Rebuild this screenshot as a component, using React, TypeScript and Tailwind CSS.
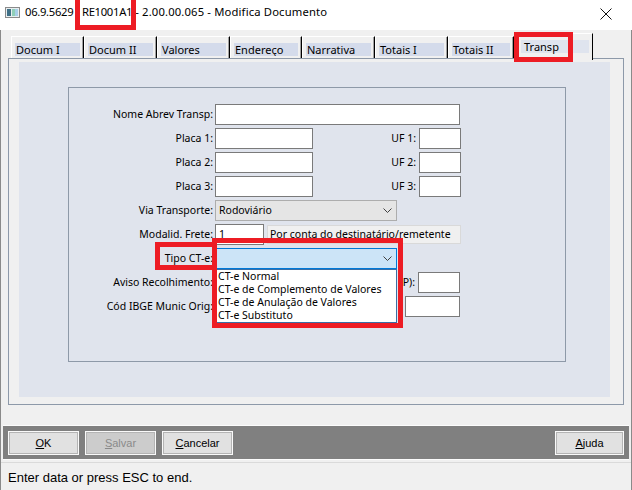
import React from 'react';

const tabs = [
  { label: 'Docum I', w: 'w-[73px]' },
  { label: 'Docum II', w: 'w-[73px]' },
  { label: 'Valores', w: 'w-[73px]' },
  { label: 'Endereço', w: 'w-[72px]' },
  { label: 'Narrativa', w: 'w-[73px]' },
  { label: 'Totais I', w: 'w-[73px]' },
  { label: 'Totais II', w: 'w-[66px]' },
];

const ctOptions = [
  'CT-e Normal',
  'CT-e de Complemento de Valores',
  'CT-e de Anulação de Valores',
  'CT-e Substituto',
];

function Chevron() {
  return (
    <svg width="9" height="5" viewBox="0 0 9 5" className="ml-auto mr-[4px]">
      <path d="M0.5 0.5 L4.5 4.5 L8.5 0.5" stroke="#404040" strokeWidth="1" fill="none" />
    </svg>
  );
}

function Label({ children }: { children: React.ReactNode }) {
  return <div className="w-[144px] shrink-0 text-right whitespace-nowrap">{children}</div>;
}

function Input({ w, value }: { w: string; value?: string }) {
  return (
    <div className={`${w} h-[21px] shrink-0 border border-[#7a7a7a] bg-white pl-[3px] leading-[19px]`}>
      {value}
    </div>
  );
}

function Btn({ first, rest, disabled }: { first: string; rest: string; disabled?: boolean }) {
  return (
    <div
      className={`w-[71px] h-[24px] flex items-center justify-center border border-[#fafafa] shadow-[inset_0_0_0_1px_#b4b4b4] text-[11px] ${
        disabled ? 'bg-[#cccccc] text-[#8a8a8a]' : 'bg-[#e1e1e1] text-black'
      }`}
    >
      <span className="underline">{first}</span>
      {rest}
    </div>
  );
}

export default function App() {
  return (
    <div className="relative w-[632px] h-[490px] overflow-hidden bg-white font-['Noto_Sans',sans-serif] text-black">
      {/* title bar */}
      <div className="h-[30px] flex items-start">
        <svg width="15" height="11" viewBox="0 0 15 11" className="ml-[5px] mt-[7px]">
          <rect x="0.5" y="0.5" width="14" height="10" fill="#e8eef0" stroke="#8a8a8a" />
          <rect x="2" y="2" width="4" height="7" fill="#3f6f86" />
          <rect x="7" y="2" width="6" height="7" fill="#8fcfb8" />
          <rect x="10" y="2" width="3" height="7" fill="#a8cfe8" />
        </svg>
        <span className="ml-[5px] mt-[4px] text-[11.25px] leading-[16px] whitespace-nowrap">
          <span className="tracking-[-0.3px]">06.9.5629 - RE1001A1</span>
          <span className="tracking-[0.15px]"> - 2.00.00.065 - Modifica Documento</span>
        </span>
        <svg width="12" height="12" viewBox="0 0 12 12" className="ml-auto mr-[20px] mt-[8px]">
          <path d="M0.5 0.5 L11.5 11.5 M11.5 0.5 L0.5 11.5" stroke="#111" strokeWidth="1" />
        </svg>
      </div>

      {/* window body */}
      <div className="h-[460px] bg-[#f0f0f0] border-x border-[#8a8a8a] flex flex-col">
        {/* tab strip */}
        <div className="h-[28px] flex items-end pl-[10px] text-[11px]">
          {tabs.map((t) => (
            <div
              key={t.label}
              className={`${t.w} h-[22px] shrink-0 border-l border-t border-white border-r border-r-black shadow-[inset_-1px_0_0_#a0a0a0] pt-[6px] pl-[3px] pr-[3px]`}
            >
              <div className="h-[13px] bg-[#d4dbeb] leading-[13px] pl-[1px] whitespace-nowrap overflow-hidden">{t.label}</div>
            </div>
          ))}
          <div className="relative z-10 w-[79px] h-[27px] -mb-[2px] shrink-0 bg-[#f0f0f0] border-l border-t border-white border-r border-r-black pt-[6px] pl-[6px] pr-[3px]">
            <div className="h-[13px] bg-[#dfe4ee] leading-[13px] pl-[3px]">Transp</div>
          </div>
        </div>

        {/* tab page */}
        <div className="ml-[7px] w-[616px] h-[347px] border border-[#8d99a9] pt-[3px] pl-[10px]">
          <div className="w-[591px] h-[335px] bg-[#e0e4ed] pt-[25px] pl-[49px]">
            <div className="w-[498px] h-[275px] border border-[#8e99a8] pt-[16px] text-[10.5px]">
              <div className="flex flex-col gap-[3px]">
                <div className="flex items-center h-[21px] gap-[2px]">
                  <Label>Nome Abrev Transp:</Label>
                  <Input w="w-[245px]" />
                </div>
                {[1, 2, 3].map((n) => (
                  <div key={n} className="flex items-center h-[21px]">
                    <Label>Placa {n}:</Label>
                    <div className="ml-[2px]">
                      <Input w="w-[98px]" />
                    </div>
                    <div className="w-[103px] text-right">UF {n}:</div>
                    <div className="ml-[3px]">
                      <Input w="w-[42px]" />
                    </div>
                  </div>
                ))}
                <div className="flex items-center h-[21px] gap-[2px]">
                  <Label>Via Transporte:</Label>
                  <div className="w-[182px] h-[21px] flex items-center border border-[#adadad] bg-[#e5e5e5] pl-[3px]">
                    <span>Rodoviário</span>
                    <Chevron />
                  </div>
                </div>
                <div className="flex items-center h-[21px]">
                  <Label>Modalid. Frete:</Label>
                  <div className="ml-[2px]">
                    <Input w="w-[49px]" value="1" />
                  </div>
                  <div className="ml-[3px] w-[194px] h-[19px] border border-[#d9d9d9] bg-[#f0f0f0] pl-[2px] leading-[17px] whitespace-nowrap">
                    Por conta do destinatário/remetente
                  </div>
                </div>
                <div className="flex items-center h-[21px] gap-[2px]">
                  <Label>Tipo CT-e:</Label>
                  <div className="relative w-[182px] h-[21px] flex items-center border border-[#0078d7] bg-[#cce4f7]">
                    <Chevron />
                    <div className="absolute left-[-1px] top-[20px] z-20 w-[182px] border border-[#3a6ea5] bg-white">
                      {ctOptions.map((o) => (
                        <div key={o} className="h-[13px] leading-[13px] pl-[2px] whitespace-nowrap">
                          {o}
                        </div>
                      ))}
                    </div>
                  </div>
                </div>
                {/* rows partly hidden under the open list */}
                <div className="flex items-center h-[21px]">
                  <Label>Aviso Recolhimento:</Label>
                  <div className="ml-[2px]">
                    <Input w="w-[90px]" />
                  </div>
                  <div className="flex-1 text-right whitespace-nowrap">P):</div>
                  <div className="ml-[3px] mr-[105px]">
                    <Input w="w-[42px]" />
                  </div>
                </div>
                <div className="flex items-center h-[21px]">
                  <Label>Cód IBGE Munic Orig:</Label>
                  <div className="ml-[2px]">
                    <Input w="w-[70px]" />
                  </div>
                  <div className="flex-1 text-right whitespace-nowrap">:</div>
                  <div className="ml-[2px] mr-[105px]">
                    <Input w="w-[55px]" />
                  </div>
                </div>
              </div>
            </div>
          </div>
        </div>

        {/* button bar */}
        <div className="mt-[20px] mx-[2px] h-[35px] border-y border-[#fcfcfc] bg-[#808080] flex items-start pt-[5px] pl-[5px] pr-[5px] font-['Liberation_Sans',sans-serif]">
          <Btn first="O" rest="K" />
          <div className="ml-[6px]">
            <Btn first="S" rest="alvar" disabled />
          </div>
          <div className="ml-[6px]">
            <Btn first="C" rest="ancelar" />
          </div>
          <div className="ml-auto">
            <div className="w-[69px] h-[24px] flex items-center justify-center border border-[#fafafa] shadow-[inset_0_0_0_1px_#b4b4b4] bg-[#e1e1e1] text-[11px]">
              <span className="underline">A</span>juda
            </div>
          </div>
        </div>

        {/* status bar */}
        <div className="mt-[2px] flex-1 border-t border-[#dadada] pl-[7px] pt-[7px] text-[13px] leading-[15px] font-['Liberation_Sans',sans-serif]">
          Enter data or press ESC to end.
        </div>
      </div>

      {/* red annotation boxes */}
      <div className="absolute left-[75px] top-[-10px] w-[61px] h-[40px] border-[5px] border-[#ed1c24]" />
      <div className="absolute left-[514px] top-[32px] w-[59px] h-[30px] border-[5px] border-[#ed1c24] z-30" />
      <div className="absolute left-[155px] top-[242px] w-[62px] h-[28px] border-[5px] border-[#ed1c24] z-30" />
      <div className="absolute left-[212px] top-[238px] w-[191px] h-[90px] border-[5px] border-[#ed1c24] z-30" />
    </div>
  );
}
